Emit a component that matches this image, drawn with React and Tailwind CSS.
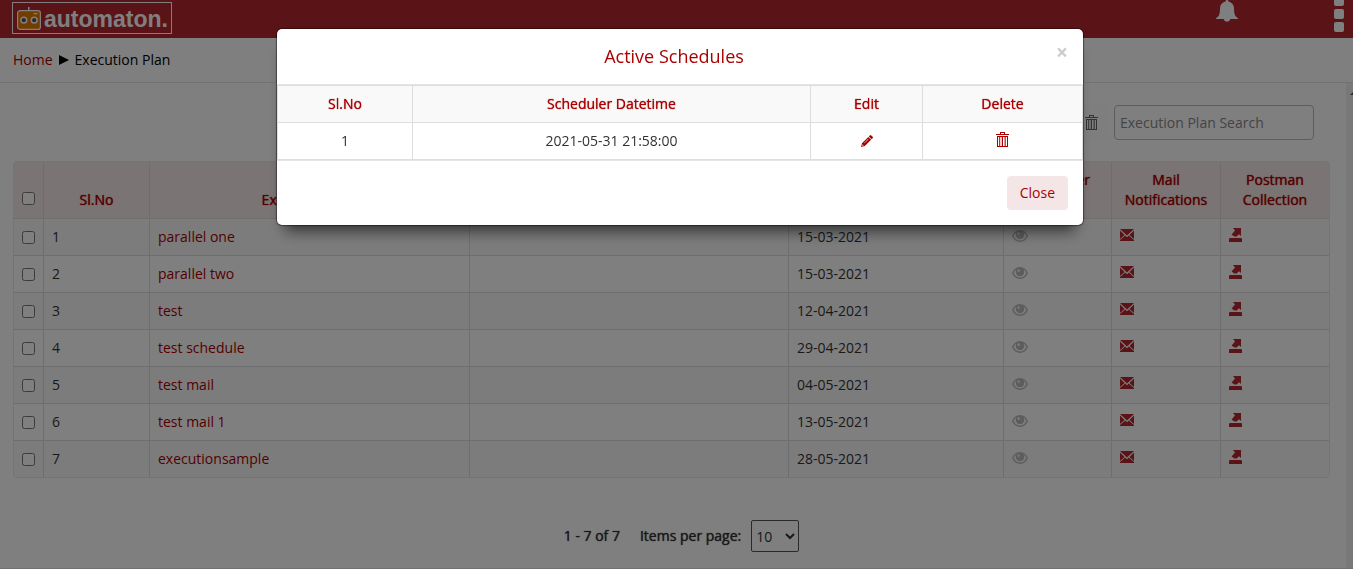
import React from "react";

const PLANS = [
  { id: 1, name: "parallel one", date: "15-03-2021" },
  { id: 2, name: "parallel two", date: "15-03-2021" },
  { id: 3, name: "test", date: "12-04-2021" },
  { id: 4, name: "test schedule", date: "29-04-2021" },
  { id: 5, name: "test mail", date: "04-05-2021" },
  { id: 6, name: "test mail 1", date: "13-05-2021" },
  { id: 7, name: "executionsample", date: "28-05-2021" },
];

const SCHEDULES = [{ id: 1, datetime: "2021-05-31 21:58:00" }];

function RobotIcon() {
  return (
    <svg width="24" height="23" viewBox="0 0 24 23" aria-hidden="true">
      <rect x="11" y="0" width="1.5" height="4" fill="#fff" />
      <rect x="0.600" y="3.600" width="22.800" height="18.800" rx="2.500" fill="#e87a00" stroke="#fff" strokeWidth="1.200" />
      <rect x="16.500" y="6" width="4" height="1.200" fill="#fff" />
      <circle cx="6.800" cy="13.200" r="3.600" fill="#fff" />
      <circle cx="17.200" cy="13.200" r="3.600" fill="#fff" />
      <circle cx="6.800" cy="13.200" r="2.100" fill="#50505e" />
      <circle cx="17.200" cy="13.200" r="2.100" fill="#50505e" />
    </svg>
  );
}

function BellIcon() {
  return (
    <svg width="22" height="22" viewBox="0 0 22 22" fill="currentColor" aria-hidden="true">
      <path d="M11 0c-1 0-1.500.7-1.500 1.400C6 2.200 4 4.800 4 8.200c0 4-.4 6.300-1.600 8L0 18.200V19h7.600a3.500 3.500 0 0 0 6.800 0H22v-.8l-2.400-2C18.400 14.500 18 12.200 18 8.200c0-3.400-2-6-5.500-6.800C12.500.7 12 0 11 0z" />
    </svg>
  );
}

function TrashIcon() {
  return (
    <svg width="13" height="15" viewBox="0 0 13 15" fill="currentColor" aria-hidden="true">
      <path d="M4 0h5v2h4v1H0V2h4zM5 1v1h3V1z" />
      <path fillRule="evenodd" d="M1 4h11v11H1zM2 5v9h1.200V5zM4.200 5v9h1.600V5zM7 5v9h1.600V5zM9.700 5v9H11V5z" />
    </svg>
  );
}

function PencilIcon() {
  return (
    <svg width="12" height="12" viewBox="0 0 12 12" fill="currentColor" aria-hidden="true">
      <path d="M8.800.4a1 1 0 0 1 1.400 0l1.400 1.400a1 1 0 0 1 0 1.400l-1 1L7.800 1.400z" />
      <path fillRule="evenodd" d="M7.300 1.900l2.800 2.800-6.300 6.300L0 12l1-3.800zM7 4.100L3.200 7.900l.3.300 3.800-3.800zM1.600 9.300L1.200 10.800l1.500-.4z" />
    </svg>
  );
}

function EyeIcon() {
  return (
    <svg width="16" height="12" viewBox="0 0 16 12" fill="currentColor" aria-hidden="true">
      <path
        fillRule="evenodd"
        d="M8 0C4.500 0 1.600 2.300 0 6c1.600 3.700 4.500 6 8 6s6.400-2.300 8-6c-1.600-3.700-4.500-6-8-6zM8 10.500C5.300 10.500 3.100 9 1.700 6 2.400 4.500 3.300 3.300 4.500 2.600A4.300 4.300 0 0 0 8 9.300a4.300 4.300 0 0 0 3.500-6.700C12.700 3.300 13.600 4.500 14.300 6c-1.400 3-3.600 4.500-6.300 4.500zM7 2.300a1.500 1.500 0 0 0-1.500 1.600l1 1.200L8 4.300z"
      />
    </svg>
  );
}

function MailIcon() {
  return (
    <svg width="14" height="12" viewBox="0 0 14 12" fill="currentColor" aria-hidden="true">
      <path d="M0 0h14L7 6.400z" />
      <path d="M0 1.500L4.600 5.900 0 10zM14 1.500L9.400 5.900 14 10z" />
      <path d="M0 12v-1l5.200-4.500L7 8.200l1.800-1.700L14 11v1z" />
    </svg>
  );
}

function ExportIcon() {
  return (
    <svg width="13" height="14" viewBox="0 0 13 14" fill="currentColor" aria-hidden="true">
      <path d="M4 0h8v8L10 6.200 7.600 8.600H5.600L5 8.200 2.600 6.400 6 2.600z" />
      <path d="M.6 10h11.800l.6.700V14H0v-3.300z" />
    </svg>
  );
}

function CaretIcon() {
  return (
    <svg width="10" height="10" viewBox="0 0 10 10" aria-hidden="true">
      <path d="M0 0l10 5-10 5z" fill="#000" />
    </svg>
  );
}

function TopBar() {
  return (
    <header className="flex h-[38px] items-start justify-between overflow-hidden bg-[#b4282e] pl-3 pr-[9px] text-white">
      <a href="#home" className="mt-[2px] flex h-8 w-[160px] items-center gap-[3px] border border-white pl-1" aria-label="automaton.">
        <RobotIcon />
        <span className="pt-[2px] font-['Liberation_Sans',Arial,sans-serif] text-[23px] font-bold leading-8">automaton.</span>
      </a>
      <div className="flex items-start gap-24">
        <button type="button" aria-label="Alerts">
          <BellIcon />
        </button>
        <button type="button" aria-label="Menu" className="-mt-1 flex flex-col gap-[3px]">
          <span className="size-[10px] rounded-[2px] bg-white" />
          <span className="size-[10px] rounded-[2px] bg-white" />
          <span className="size-[10px] rounded-[2px] bg-white" />
        </button>
      </div>
    </header>
  );
}

const strong = "font-medium [text-shadow:0_0_1px_currentColor]";

function HeadCell({ children }) {
  return <th className={`h-14 border-l border-[#ddd] p-2 text-center align-bottom text-[#a00] ${strong}`}>{children}</th>;
}

const cell = "border-l border-t border-[#ddd] px-2 py-2";

function PlanTable() {
  return (
    <div className="overflow-hidden rounded border border-[#e8e8e8]">
      <table className="w-full table-fixed border-separate border-spacing-0">
        <colgroup>
          <col className="w-[29px]" />
          <col className="w-[106px]" />
          <col className="w-[320px]" />
          <col />
          <col className="w-[215px]" />
          <col className="w-[108px]" />
          <col className="w-[109px]" />
          <col className="w-[109px]" />
        </colgroup>
        <thead className="bg-[#f6e8e8]">
          <tr>
            <th className="px-2 pb-[13px] align-bottom">
              <input type="checkbox" aria-label="Select all plans" className="block size-[13px]" />
            </th>
            <HeadCell>Sl.No</HeadCell>
            <HeadCell>Execution Plan</HeadCell>
            <HeadCell />
            <HeadCell />
            <HeadCell>
              <span className="block pb-5">Scheduler</span>
            </HeadCell>
            <HeadCell>Mail Notifications</HeadCell>
            <HeadCell>Postman Collection</HeadCell>
          </tr>
        </thead>
        <tbody>
          {PLANS.map((plan) => (
            <tr key={plan.id} className="odd:bg-[#f9f9f9]">
              <td className="border-t border-[#ddd] px-2">
                <input type="checkbox" aria-label={`Select ${plan.name}`} className="block size-[13px]" />
              </td>
              <td className={cell}>{plan.id}</td>
              <td className={cell}>
                <a href="#plan" className="text-[#a00]">{plan.name}</a>
              </td>
              <td className={cell} />
              <td className={cell}>{plan.date}</td>
              <td className={cell}>
                <button type="button" aria-label="View schedules" className="block pb-[2px] text-[#bbb]">
                  <EyeIcon />
                </button>
              </td>
              <td className={cell}>
                <button type="button" aria-label="Mail notifications" className="block pb-1 text-[#b4282e]">
                  <MailIcon />
                </button>
              </td>
              <td className={cell}>
                <button type="button" aria-label="Export collection" className="block pb-1 text-[#b4282e]">
                  <ExportIcon />
                </button>
              </td>
            </tr>
          ))}
        </tbody>
      </table>
    </div>
  );
}

function Pagination() {
  return (
    <div className="mt-[42px] flex items-center justify-center pl-5">
      <span className={`mr-5 ${strong}`}>1 - 7 of 7</span>
      <label htmlFor="page-size" className={`mr-[10px] ${strong}`}>Items per page:</label>
      <select id="page-size" defaultValue="10" className="h-8 w-12 rounded-[2px] border border-[#555] bg-white text-[14px]">
        <option>10</option>
        <option>25</option>
        <option>50</option>
      </select>
    </div>
  );
}

function ScheduleModal() {
  const th = `border-b border-l border-[#ddd] p-2 text-[#a00] first:border-l-0 ${strong}`;
  const td = "border-l border-[#ddd] p-2 first:border-l-0";
  return (
    <div className="fixed inset-0 flex items-start justify-center bg-black/50 pl-[7px] pt-[29px]">
      <section
        role="dialog"
        aria-modal="true"
        aria-labelledby="modal-title"
        className="w-[806px] max-w-full rounded-[5px] bg-white shadow-[0_0_1px_1px_rgba(0,0,0,0.45),0_14px_14px_-8px_rgba(0,0,0,0.6)]"
      >
        <div className="relative flex h-[55px] items-center justify-center pb-[2px] pr-3">
          <h2 id="modal-title" className="text-[18px] leading-5 text-[#a00]">Active Schedules</h2>
          <button type="button" aria-label="Close dialog" className="absolute right-[15px] top-[13px] text-[21px] font-bold leading-5 text-[#ccc]">
            ×
          </button>
        </div>
        <div className="border-y border-[#e5e5e5]">
          <table className="w-full table-fixed border-separate border-spacing-0 border border-[#ddd] text-center">
            <colgroup>
              <col className="w-[134px]" />
              <col />
              <col className="w-[112px]" />
              <col className="w-[160px]" />
            </colgroup>
            <thead className="bg-[#f9f9f9]">
              <tr>
                <th className={th}>Sl.No</th>
                <th className={th}>Scheduler Datetime</th>
                <th className={th}>Edit</th>
                <th className={th}>Delete</th>
              </tr>
            </thead>
            <tbody>
              {SCHEDULES.map((item) => (
                <tr key={item.id}>
                  <td className={td}>{item.id}</td>
                  <td className={td}>{item.datetime}</td>
                  <td className={td}>
                    <button type="button" aria-label="Edit schedule" className="mx-auto block text-[#a00]">
                      <PencilIcon />
                    </button>
                  </td>
                  <td className={td}>
                    <button type="button" aria-label="Delete schedule" className="mx-auto block pb-1 text-[#a00]">
                      <TrashIcon />
                    </button>
                  </td>
                </tr>
              ))}
            </tbody>
          </table>
        </div>
        <div className="flex justify-end p-[15px]">
          <button type="button" className="rounded bg-[#f4e6e6] px-[13px] py-[7px] text-[#a00]">Close</button>
        </div>
      </section>
    </div>
  );
}

export default function App() {
  return (
    <div className="flex min-h-screen flex-col bg-white font-['Open_Sans',sans-serif] text-[14px] leading-5 text-[#333]">
      <TopBar />
      <nav aria-label="Breadcrumb" className="flex h-[45px] items-center gap-[6px] border-b border-[#e5e5e5] pl-[13px] text-black">
        <a href="#home" className="text-[#a00]">Home</a>
        <CaretIcon />
        <span>Execution Plan</span>
      </nav>
      <div className="flex flex-1 border-b border-[#e8dcdc]">
        <main className="flex-1 pl-[13px] pr-4 pt-[22px]">
          <div className="mb-[21px] flex items-center justify-end gap-1 pr-4">
            <button type="button" aria-label="Delete plans" className="rounded bg-[#fdfdfd] px-3 py-[10px] text-[#666]">
              <TrashIcon />
            </button>
            <input
              type="search"
              aria-label="Execution Plan Search"
              placeholder="Execution Plan Search"
              className="h-[35px] w-[200px] rounded border border-[#bbb] bg-white px-[5px] placeholder:text-[#888]"
            />
          </div>
          <PlanTable />
          <Pagination />
        </main>
        <div className="w-[7px] bg-[#f1f1f1] pt-2">
          <svg width="7" height="4" viewBox="0 0 7 4" aria-hidden="true">
            <path d="M4 4l4-4v4z" fill="#555" />
          </svg>
        </div>
      </div>
      <ScheduleModal />
    </div>
  );
}
